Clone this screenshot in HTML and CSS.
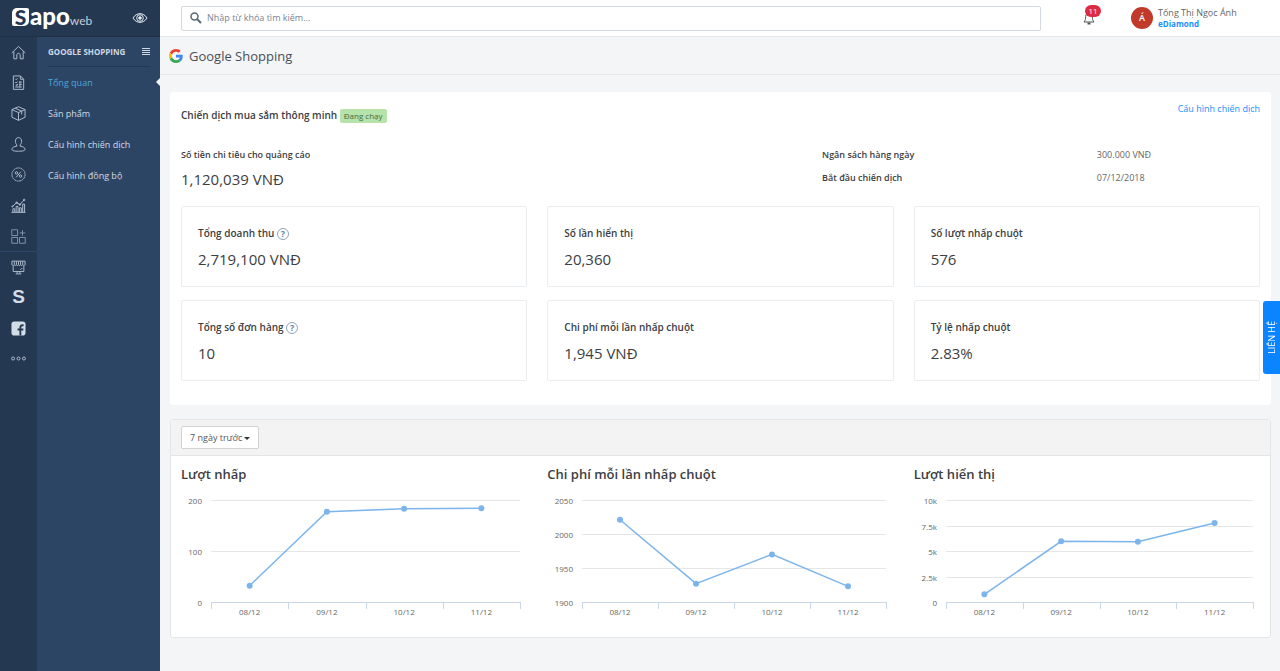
FILE: index.html
```html
<!DOCTYPE html>
<html lang="vi">
<head>
    <meta charset="utf-8">
    <meta name="viewport" content="width=device-width, initial-scale=1">
    <title>Google Shopping - Sapo Web</title>
    <link rel="stylesheet" href="styles.css">
</head>
<body>
    <aside class="sidebar">
        <div class="brand">
            <a href="#" class="logo"><span class="logo-s">S</span><span class="logo-apo">apo</span><span class="logo-web">web</span></a>
            <button type="button" class="icon-button" aria-label="Xem website">
                <svg width="16" height="12" viewBox="0 0 16 12" fill="none" stroke="#e4eaf1">
                    <path d="M1 6C4.500 .2 11.500 .2 15 6C11.500 11.800 4.500 11.800 1 6z"/>
                    <circle cx="8" cy="6" r="3.300"/>
                    <circle cx="8" cy="6" r="1.300" fill="#e4eaf1"/>
                </svg>
            </button>
        </div>
        <div class="menus">
            <nav class="rail">
                <a href="#" aria-label="Trang chủ">
                    <svg viewBox="0 0 16 16"><path d="M.8 8.500L8 1.500L15.200 8.500M3 7V14.700H6.200V10.500C6.200 8.300 9.800 8.300 9.800 10.500V14.700H13V7"/></svg>
                </a>
                <a href="#" aria-label="Đơn hàng">
                    <svg viewBox="0 0 16 16"><path d="M2.500 1H10L13.500 4.500V15.300H2.500zM10 1V4.500H13.500M4.500 4L5.500 5L7 3.500M4.500 7.500L5.500 8.500L7 7M9 7.500H11.500M9 10H11.500M4.500 12.800H11.500M9.500 6.500V13M6 10H7.500M5 11H7"/></svg>
                </a>
                <a href="#" aria-label="Sản phẩm">
                    <svg viewBox="0 0 16 16"><path d="M8 .8L15 3.800V12L8 15.300L1 12V3.800zM1 3.800L8 7L15 3.800M8 7V15.300M4.500 2.300L11.400 5.500V9"/></svg>
                </a>
                <a href="#" aria-label="Khách hàng">
                    <svg viewBox="0 0 16 16"><path d="M8 .6C5.900 .6 4.700 2.300 4.700 4.600C4.700 6.300 5.500 7.700 6.300 8.500V9.700C3.200 10.200 1 11.300 1 13.200C1 14.700 4 15.200 8 15.200S15 14.700 15 13.200C15 11.300 12.800 10.200 9.700 9.700V8.500C10.500 7.700 11.300 6.300 11.300 4.600C11.300 2.300 10.100 .6 8 .6z"/></svg>
                </a>
                <a href="#" aria-label="Khuyến mại">
                    <svg viewBox="0 0 16 16"><circle cx="8" cy="8" r="7" stroke-dasharray="2.200 .5"/><path d="M10.500 5L5.500 11"/><circle cx="5.800" cy="6.300" r="1.300"/><circle cx="10.200" cy="9.700" r="1.300"/></svg>
                </a>
                <a href="#" aria-label="Báo cáo">
                    <svg viewBox="0 0 16 16"><path d="M.5 15.300H15.500M2 15V11.500H4V15M5.500 15V9H7.500V15M9 15V10.500H11V15M12.500 15V6.500H14.500V15M1.500 9L6 5L9.500 7L14 2"/><circle cx="1.500" cy="9" r=".6"/><circle cx="6" cy="5" r=".8"/><circle cx="9.500" cy="7" r=".8"/><circle cx="14" cy="2" r=".8"/></svg>
                </a>
                <a href="#" aria-label="Ứng dụng" class="rail-dim">
                    <svg viewBox="0 0 16 16"><path d="M.8 .8H7V7H.8zM.8 9H7V15.200H.8zM9 9H15.200V15.200H9zM12.200 1.300V7.200M9.200 4.200H15.200"/></svg>
                </a>
                <a href="#" aria-label="Website" class="rail-split">
                    <svg viewBox="0 0 16 16"><path d="M1 1.200H15V5C15 6 13 6 12.500 5.200C12 6 10.500 6 10 5.200C9.500 6 8.500 6 8 5.200C7.500 6 6.500 6 6 5.200C5.500 6 4 6 3.500 5.200C3 6 1 6 1 5zM3.500 1.500V5M5.800 1.500V5M8 1.500V5M10.200 1.500V5M12.500 1.500V5M2.300 6.500V12.300H13.700V6.500M6.500 12.300V14.500M9.500 12.300V14.500M5 14.800H11M10 10.500L12 8.500"/></svg>
                </a>
                <a href="#" aria-label="Sapo" class="rail-s">S</a>
                <a href="#" aria-label="Facebook">
                    <svg viewBox="0 0 16 16"><rect x=".5" y=".5" width="15" height="15" rx="3" fill="#d3dde8" stroke="none"/><path d="M10 15.500V7C10 5 11 4.300 13.500 4.600M7 9H13.200" stroke="#253852" stroke-width="2"/></svg>
                </a>
                <a href="#" aria-label="Thêm">
                    <svg viewBox="0 0 16 16"><circle cx="2.200" cy="8" r="1.600"/><circle cx="8" cy="8" r="1.600"/><circle cx="13.800" cy="8" r="1.600"/></svg>
                </a>
            </nav>
            <nav class="submenu">
                <div class="submenu-head">
                    <span>GOOGLE SHOPPING</span>
                    <button type="button" class="icon-button" aria-label="Thu gọn">
                        <svg width="8" height="7" viewBox="0 0 8 7" stroke="#cdd7e3"><path d="M0 .5H8M0 2.500H8M0 4.500H8M0 6.500H8"/></svg>
                    </button>
                </div>
                <a href="#" class="active">Tổng quan</a>
                <a href="#">Sản phẩm</a>
                <a href="#">Cấu hình chiến dịch</a>
                <a href="#">Cấu hình đồng bộ</a>
            </nav>
        </div>
    </aside>

    <div class="main">
        <header class="topbar">
            <label class="search">
                <svg width="12" height="12" viewBox="0 0 12 12" fill="none" stroke="#5b6875"><circle cx="4.500" cy="4.500" r="3.500" stroke-width="1.500"/><path d="M7.200 7.200L11 11" stroke-width="2"/></svg>
                <input type="text" placeholder="Nhập từ khóa tìm kiếm..." aria-label="Tìm kiếm">
            </label>
            <div class="account">
                <button type="button" class="icon-button bell" aria-label="Thông báo">
                    <svg width="12" height="14" viewBox="0 0 12 14" fill="none" stroke="#555"><path d="M1 11C2.500 9.500 2.500 8 2.700 5.500C2.900 3 4 2 6 2S9.100 3 9.300 5.500C9.500 8 9.500 9.500 11 11z"/><path d="M4.500 12.500H7.500" stroke-width="2"/></svg>
                    <span class="count">11</span>
                </button>
                <a href="#" class="user">
                    <span class="avatar">Á</span>
                    <span class="user-text">
                        <span class="user-name">Tống Thị Ngọc Ánh</span>
                        <span class="user-shop">eDiamond</span>
                    </span>
                </a>
            </div>
        </header>

        <div class="page-head">
            <svg width="14" height="14" viewBox="0 0 48 48">
                <path fill="#ea4335" d="M24 9.500c3.500 0 6.700 1.200 9.200 3.600l6.900-6.900C35.900 2.400 30.500 0 24 0 14.600 0 6.500 5.400 2.600 13.200l8 6.200C12.400 13.700 17.700 9.500 24 9.500z"/>
                <path fill="#4285f4" d="M47 24.500c0-1.600-.2-3.100-.4-4.500H24v9h12.900c-.6 3-2.200 5.500-4.700 7.200l7.700 6C44.400 38 47 31.800 47 24.500z"/>
                <path fill="#fbbc05" d="M10.500 28.600c-.5-1.500-.8-3-.8-4.600s.3-3.100.8-4.600l-8-6.200C.9 16.500 0 20.100 0 24s.9 7.500 2.600 10.800z"/>
                <path fill="#34a853" d="M24 48c6.500 0 11.900-2.100 15.900-5.800l-7.700-6c-2.200 1.500-4.900 2.300-8.200 2.300-6.300 0-11.600-4.200-13.500-9.900l-8 6.200C6.500 42.600 14.600 48 24 48z"/>
            </svg>
            <h1>Google Shopping</h1>
        </div>

        <section class="panel campaign">
            <div class="campaign-head">
                <h2>Chiến dịch mua sắm thông minh <span class="status">Đang chạy</span></h2>
                <a href="#">Cấu hình chiến dịch</a>
            </div>
            <div class="facts">
                <div class="spend">
                    <h3>Số tiền chi tiêu cho quảng cáo</h3>
                    <p class="amount">1,120,039 VNĐ</p>
                </div>
                <dl>
                    <dt>Ngân sách hàng ngày</dt>
                    <dd>300.000 VNĐ</dd>
                    <dt>Bắt đầu chiến dịch</dt>
                    <dd>07/12/2018</dd>
                </dl>
            </div>
            <div class="cards">
                <div class="card">
                    <h3>Tổng doanh thu <button type="button" class="help" aria-label="Trợ giúp">?</button></h3>
                    <p class="amount">2,719,100 VNĐ</p>
                </div>
                <div class="card">
                    <h3>Số lần hiển thị</h3>
                    <p class="amount">20,360</p>
                </div>
                <div class="card">
                    <h3>Số lượt nhấp chuột</h3>
                    <p class="amount">576</p>
                </div>
                <div class="card">
                    <h3>Tổng số đơn hàng <button type="button" class="help" aria-label="Trợ giúp">?</button></h3>
                    <p class="amount">10</p>
                </div>
                <div class="card">
                    <h3>Chi phí mỗi lần nhấp chuột</h3>
                    <p class="amount">1,945 VNĐ</p>
                </div>
                <div class="card">
                    <h3>Tỷ lệ nhấp chuột</h3>
                    <p class="amount">2.83%</p>
                </div>
            </div>
        </section>

        <section class="panel report">
            <div class="report-head">
                <div class="range">
                    <select aria-label="Khoảng thời gian">
                        <option>7 ngày trước</option>
                        <option>30 ngày trước</option>
                    </select>
                </div>
            </div>
            <div class="charts">
                <div class="chart">
                    <h2>Lượt nhấp</h2>
                    <svg id="clicks"></svg>
                </div>
                <div class="chart">
                    <h2>Chi phí mỗi lần nhấp chuột</h2>
                    <svg id="cost"></svg>
                </div>
                <div class="chart">
                    <h2>Lượt hiển thị</h2>
                    <svg id="views"></svg>
                </div>
            </div>
        </section>
    </div>

    <button type="button" class="contact">LIÊN HỆ</button>

    <script src="charts.js"></script>
</body>
</html>
```
FILE: styles.css
```css
* {
    box-sizing: border-box;
}

body {
    display: flex;
    min-height: 100vh;
    margin: 0;
    background-color: #f4f5f7;
    color: #3c4043;
    font-family: "Open Sans", "Noto Sans", sans-serif;
    font-size: 9px;
    line-height: 14px;
}

h1, h2, h3, p, dl, dd {
    margin: 0;
}

h3 {
    font-size: 10px;
    font-weight: 600;
    line-height: 16px;
}

a {
    color: #1890ff;
    text-decoration: none;
}

button, input, select {
    font: inherit;
}

.icon-button {
    display: flex;
    padding: 0;
    border: none;
    background: none;
    cursor: pointer;
}

/* sidebar */
.sidebar {
    display: flex;
    flex-direction: column;
    flex: 0 0 160px;
    background-color: #253852;
}

.brand {
    display: flex;
    align-items: center;
    justify-content: space-between;
    height: 37px;
    padding: 0 12px;
    border-bottom: 1px solid #20324a;
}

.logo {
    display: flex;
    align-items: baseline;
    color: #fff;
    font-family: Lato, sans-serif;
    line-height: 18px;
}

.logo-s {
    width: 17px;
    margin-right: 1px;
    border-radius: 5px 2px 5px 2px;
    background-color: #fff;
    color: #253852;
    font-size: 21px;
    font-weight: 900;
    text-align: center;
}

.logo-apo {
    font-size: 24px;
    font-weight: 900;
}

.logo-web {
    font-size: 12px;
    color: #c5cfdb;
}

.menus {
    display: flex;
    flex: 1;
}

.rail {
    display: grid;
    grid-auto-rows: 1fr;
    width: 37px;
    height: 337px;
}

.rail a {
    display: flex;
    align-items: center;
    justify-content: center;
}

.rail svg {
    width: 15px;
    height: 15px;
    fill: none;
    stroke: #b4c2d2;
}

.rail .rail-dim svg {
    stroke: #8496ab;
}

.rail .rail-split {
    border-top: 1px solid #2f4868;
}

.rail .rail-s {
    color: #d3dde8;
    font-family: "Liberation Sans", sans-serif;
    font-size: 19px;
    font-weight: 700;
}

.submenu {
    flex: 1;
    background-color: #2d4564;
}

.submenu-head {
    display: flex;
    align-items: center;
    justify-content: space-between;
    height: 30px;
    margin: 0 10px 0 11px;
    border-bottom: 1px solid #253852;
    color: #cdd7e3;
    font-size: 8px;
    font-weight: 700;
}

.submenu a {
    display: block;
    position: relative;
    padding-left: 11px;
    color: #d0dae5;
    line-height: 31px;
}

.submenu .active {
    color: #4ba6dd;
}

.submenu .active::after {
    content: "";
    position: absolute;
    top: 11px;
    right: 0;
    border: 4px solid transparent;
    border-left: none;
    border-right-color: #f4f5f7;
}

/* top bar */
.main {
    flex: 1;
    min-width: 0;
}

.topbar {
    display: flex;
    align-items: center;
    height: 37px;
    padding-left: 21px;
    border-bottom: 1px solid #e6e8ea;
    background-color: #fff;
}

.search {
    display: flex;
    align-items: center;
    flex: 1;
    gap: 5px;
    height: 25px;
    padding: 0 8px;
    border: 1px solid #d3d9df;
    border-radius: 2px;
}

.search input {
    flex: 1;
    padding: 0;
    border: none;
    outline: none;
    color: #3c4043;
}

.search input::placeholder {
    color: #7a8591;
}

.account {
    display: flex;
    align-items: center;
    gap: 36px;
    width: 239px;
    padding-left: 42px;
}

.bell {
    position: relative;
}

.count {
    position: absolute;
    top: -6px;
    left: 2px;
    width: 16px;
    border-radius: 6px;
    background-color: #dc2b43;
    color: #fff;
    font-size: 8px;
    line-height: 12px;
}

.user {
    display: flex;
    align-items: center;
    gap: 5px;
    white-space: nowrap;
}

.avatar {
    width: 22px;
    height: 22px;
    border-radius: 50%;
    background-color: #c0392b;
    color: #fff;
    font-weight: 600;
    line-height: 22px;
    text-align: center;
}

.user-text {
    display: flex;
    flex-direction: column;
    line-height: 11px;
}

.user-name {
    color: #666;
}

.user-shop {
    font-size: 8px;
    font-weight: 700;
}

.page-head {
    display: flex;
    align-items: center;
    gap: 6px;
    height: 38px;
    padding-left: 9px;
    border-bottom: 1px solid #e6e8ea;
}

.page-head h1 {
    color: #4a4f57;
    font-size: 13px;
    font-weight: 400;
}

/* panels */
.panel {
    margin: 0 9px 14px 10px;
    border-radius: 3px;
    background-color: #fff;
}

.campaign {
    margin-top: 17px;
    padding: 10px 11px 24px;
}

.campaign-head {
    display: flex;
    justify-content: space-between;
}

.campaign-head h2 {
    padding-top: 5px;
    font-size: 10px;
    font-weight: 600;
    line-height: 16px;
}

.status {
    display: inline-block;
    padding: 0 4px;
    border-radius: 2px;
    background-color: #b5e3aa;
    color: #4b6846;
    font-size: 8px;
    font-weight: 400;
    line-height: 14px;
}

.amount {
    font-size: 15px;
    line-height: 20px;
}

.facts {
    display: grid;
    grid-template-columns: 7fr 5fr;
    margin: 24px -20px 17px 0;
}

.spend h3 {
    font-size: 9px;
}

.spend .amount {
    margin-top: 6px;
}

.facts dl {
    display: grid;
    grid-template-columns: 3fr 2fr;
    grid-auto-rows: 16px;
    row-gap: 7px;
    line-height: 16px;
}

.facts dt {
    font-weight: 600;
}

.facts dd {
    color: #666;
}

.cards {
    display: grid;
    grid-template-columns: repeat(3, 1fr);
    gap: 13px 20px;
}

.card {
    padding: 18px 16px 17px;
    border: 1px solid #ebeef0;
    border-radius: 2px;
}

.card .amount {
    margin-top: 8px;
}

.help {
    width: 12px;
    height: 12px;
    padding: 0;
    border: 1px solid #8fa5ba;
    border-radius: 50%;
    background: none;
    color: #6484a3;
    font-size: 9px;
    font-weight: 700;
    line-height: 10px;
    vertical-align: middle;
    cursor: pointer;
}

/* report */
.report {
    border: 1px solid #e3e5e7;
}

.report-head {
    padding: 6px 10px;
    border-bottom: 1px solid #e3e5e7;
    background-color: #f3f3f3;
}

.range {
    position: relative;
    width: 78px;
}

.range::after {
    content: "";
    position: absolute;
    top: 11px;
    right: 9px;
    border: 3px solid transparent;
    border-top-color: #333;
    border-bottom: none;
    pointer-events: none;
}

.range select {
    display: block;
    width: 100%;
    height: 23px;
    padding: 0 8px;
    border: 1px solid #d2d2d2;
    border-radius: 2px;
    background-color: #fff;
    color: #555;
    appearance: none;
}

.charts {
    display: grid;
    grid-template-columns: repeat(3, 1fr);
    gap: 20px;
    padding: 8px 10px 17px;
}

.chart {
    min-width: 0;
}

.chart h2 {
    font-size: 13px;
    font-weight: 600;
    line-height: 20px;
}

.chart svg {
    display: block;
    width: 100%;
    height: 136px;
}

.chart text {
    fill: #666;
    font-size: 8px;
}

.chart .grid-line {
    stroke: #e6e6e6;
}

.chart .axis {
    fill: none;
    stroke: #ccd6eb;
}

.chart .series {
    fill: none;
    stroke: #7cb5ec;
    stroke-width: 1.5px;
}

.chart .dot {
    fill: #7cb5ec;
}

.contact {
    position: fixed;
    top: 301px;
    right: 0;
    width: 17px;
    height: 73px;
    padding: 0;
    border: none;
    border-radius: 0 3px 3px 0;
    background-color: #0a84ff;
    color: #fff;
    line-height: 17px;
    writing-mode: vertical-rl;
    transform: rotate(180deg);
    cursor: pointer;
}
```
FILE: charts.js
```js
const days = ["08/12", "09/12", "10/12", "11/12"];

const charts = [
    { id: "clicks", left: 30, min: 0, max: 200, labels: ["0", "100", "200"], values: [32, 177, 183, 184] },
    { id: "cost", left: 35, min: 1900, max: 2050, labels: ["1900", "1950", "2000", "2050"], values: [2021, 1927, 1970, 1923] },
    { id: "views", left: 32, min: 0, max: 10000, labels: ["0", "2.5k", "5k", "7.5k", "10k"], values: [750, 5950, 5900, 7750] }
];

const plotTop = 16;
const plotBottom = 118;

function drawChart(chart) {
    const svg = document.getElementById(chart.id);
    const right = svg.clientWidth - 7;
    const step = (right - chart.left) / days.length;
    const height = plotBottom - plotTop;
    let html = "";

    chart.labels.forEach((label, i) => {
        const y = Math.round(plotBottom - height * i / (chart.labels.length - 1)) + 0.5;
        if (i > 0) {
            html += `<line class="grid-line" x1="${chart.left}" x2="${right}" y1="${y}" y2="${y}"/>`;
        }
        html += `<text x="${chart.left - 9}" y="${y + 3}" text-anchor="end">${label}</text>`;
    });

    let axis = `M${chart.left} ${plotBottom + 0.5}H${right}`;
    for (let i = 0; i <= days.length; i++) {
        axis += `M${Math.round(chart.left + step * i) + 0.5} ${plotBottom}v7`;
    }
    html += `<path class="axis" d="${axis}"/>`;

    const points = chart.values.map((value, i) => [
        chart.left + step * (i + 0.5),
        plotBottom - height * (value - chart.min) / (chart.max - chart.min)
    ]);
    html += `<polyline class="series" points="${points.join(" ")}"/>`;
    points.forEach(([x, y], i) => {
        html += `<circle class="dot" cx="${x}" cy="${y}" r="3"/>`;
        html += `<text x="${x}" y="${plotBottom + 13}" text-anchor="middle">${days[i]}</text>`;
    });

    svg.innerHTML = html;
}

function drawAll() {
    charts.forEach(drawChart);
}

drawAll();
window.addEventListener("resize", drawAll);
```
